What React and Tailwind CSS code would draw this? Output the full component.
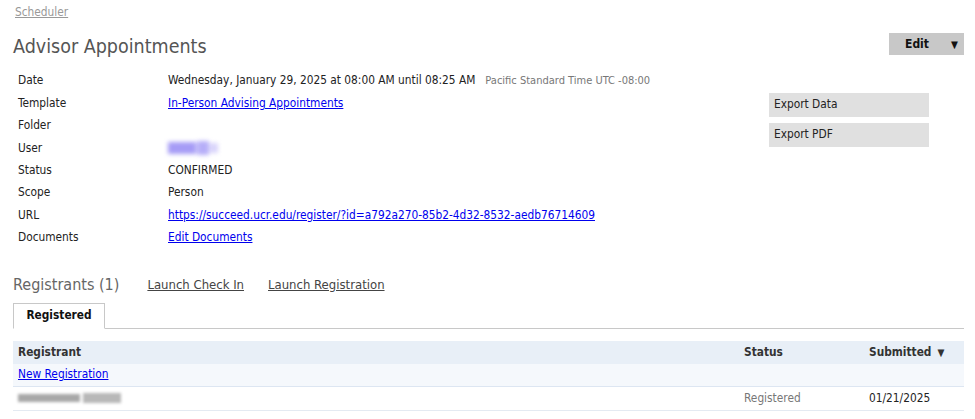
import React from "react";

const rows = [
  ["Date", "date"],
  ["Template", "template"],
  ["Folder", ""],
  ["User", "user"],
  ["Status", "CONFIRMED"],
  ["Scope", "Person"],
  ["URL", "url"],
  ["Documents", "docs"],
];

function Value({ v }) {
  if (v === "date")
    return (
      <span>
        Wednesday, January 29, 2025 at 08:00 AM until 08:25 AM
        <span className="ml-[10px] text-[11px] text-[#777]">Pacific Standard Time UTC -08:00</span>
      </span>
    );
  if (v === "template")
    return <a href="#" className="text-[#0000ee] underline">In-Person Advising Appointments</a>;
  if (v === "user")
    return (
      <span className="inline-flex h-[16px] items-center gap-[1px] blur-[2px]">
        <span className="h-[12px] w-[28px] bg-[#a69cf6]" />
        <span className="h-[14px] w-[12px] bg-[#b6aef8]" />
        <span className="h-[10px] w-[8px] bg-[#d8d3fb]" />
      </span>
    );
  if (v === "url")
    return (
      <a href="#" className="text-[#0000ee] underline">
        https://succeed.ucr.edu/register/?id=a792a270-85b2-4d32-8532-aedb76714609
      </a>
    );
  if (v === "docs")
    return <a href="#" className="text-[#0000ee] underline">Edit Documents</a>;
  return <span>{v}</span>;
}

export default function App() {
  return (
    <div
      className="w-[975px] h-[419px] overflow-hidden bg-white text-[11.8px] text-[#222]"
      style={{ fontFamily: '"DejaVu Sans Condensed", "Liberation Sans", sans-serif' }}
    >
      <div className="pl-[13px] pr-[11px]">
        <div className="pt-[4px] pl-[2px] h-[22px]">
          <a href="#" className="text-[#999] underline">Scheduler</a>
        </div>
        <div className="flex items-start justify-between mt-[12px]">
          <h1 className="text-[19.5px] leading-[26px] text-[#555]">Advisor Appointments</h1>
          <button className="mt-[-1px] flex h-[22px] w-[75px] items-center justify-between bg-[#c8c8c8] pl-[16px] pr-[6px] text-[12px] font-bold text-[#111]">
            <span>Edit</span>
            <span className="text-[10px]">▼</span>
          </button>
        </div>
        <div className="flex mt-[10px]">
          <div className="flex-1 pl-[5px]">
            {rows.map(([k, v]) => (
              <div key={k} className="flex h-[22.4px] items-center">
                <div className="w-[150px]">{k}</div>
                <Value v={v} />
              </div>
            ))}
          </div>
          <div className="mr-[35px] mt-[23px] flex w-[160px] flex-col gap-[6px]">
            <div className="flex h-[24px] items-center bg-[#e0e0e0] px-[5px]">Export Data</div>
            <div className="flex h-[24px] items-center bg-[#e0e0e0] px-[5px]">Export PDF</div>
          </div>
        </div>
        <div className="mt-[24px] flex items-center h-[24px]">
          <span className="text-[16px] text-[#666]">Registrants (1)</span>
          <a href="#" className="ml-[28px] text-[13px] text-[#444] underline">Launch Check In</a>
          <a href="#" className="ml-[24px] text-[13px] text-[#444] underline">Launch Registration</a>
        </div>
        <div className="mt-[6px] flex items-end border-b border-[#c8c8c8]">
          <div className="mb-[-1px] flex h-[26px] w-[92px] items-center justify-center border border-b-white border-[#c8c8c8] bg-white font-bold text-[#111]">
            Registered
          </div>
        </div>
        <div className="mt-[12px]">
          <div className="flex h-[23px] items-center bg-[#e8eff7] pl-[5px] font-bold text-[#333]">
            <div className="flex-1">Registrant</div>
            <div className="w-[125px]">Status</div>
            <div className="w-[95px] flex items-center">
              Submitted<span className="ml-[6px] text-[10px]">▼</span>
            </div>
          </div>
          <div className="flex h-[23px] items-center border-b border-[#dde6f2] bg-[#f5f8fc] pl-[5px]">
            <a href="#" className="text-[#0000ee] underline">New Registration</a>
          </div>
          <div className="flex h-[24px] items-center border-b border-[#e4eaf2] pl-[5px]">
            <div className="flex-1">
              <span className="inline-flex items-center gap-[3px] blur-[1.5px]">
                <span className="h-[8px] w-[62px] bg-[#a8a8a8]" />
                <span className="h-[10px] w-[38px] bg-[#b8b8b8]" />
              </span>
            </div>
            <div className="w-[125px] text-[#777]">Registered</div>
            <div className="w-[95px]">01/21/2025</div>
          </div>
        </div>
      </div>
    </div>
  );
}
